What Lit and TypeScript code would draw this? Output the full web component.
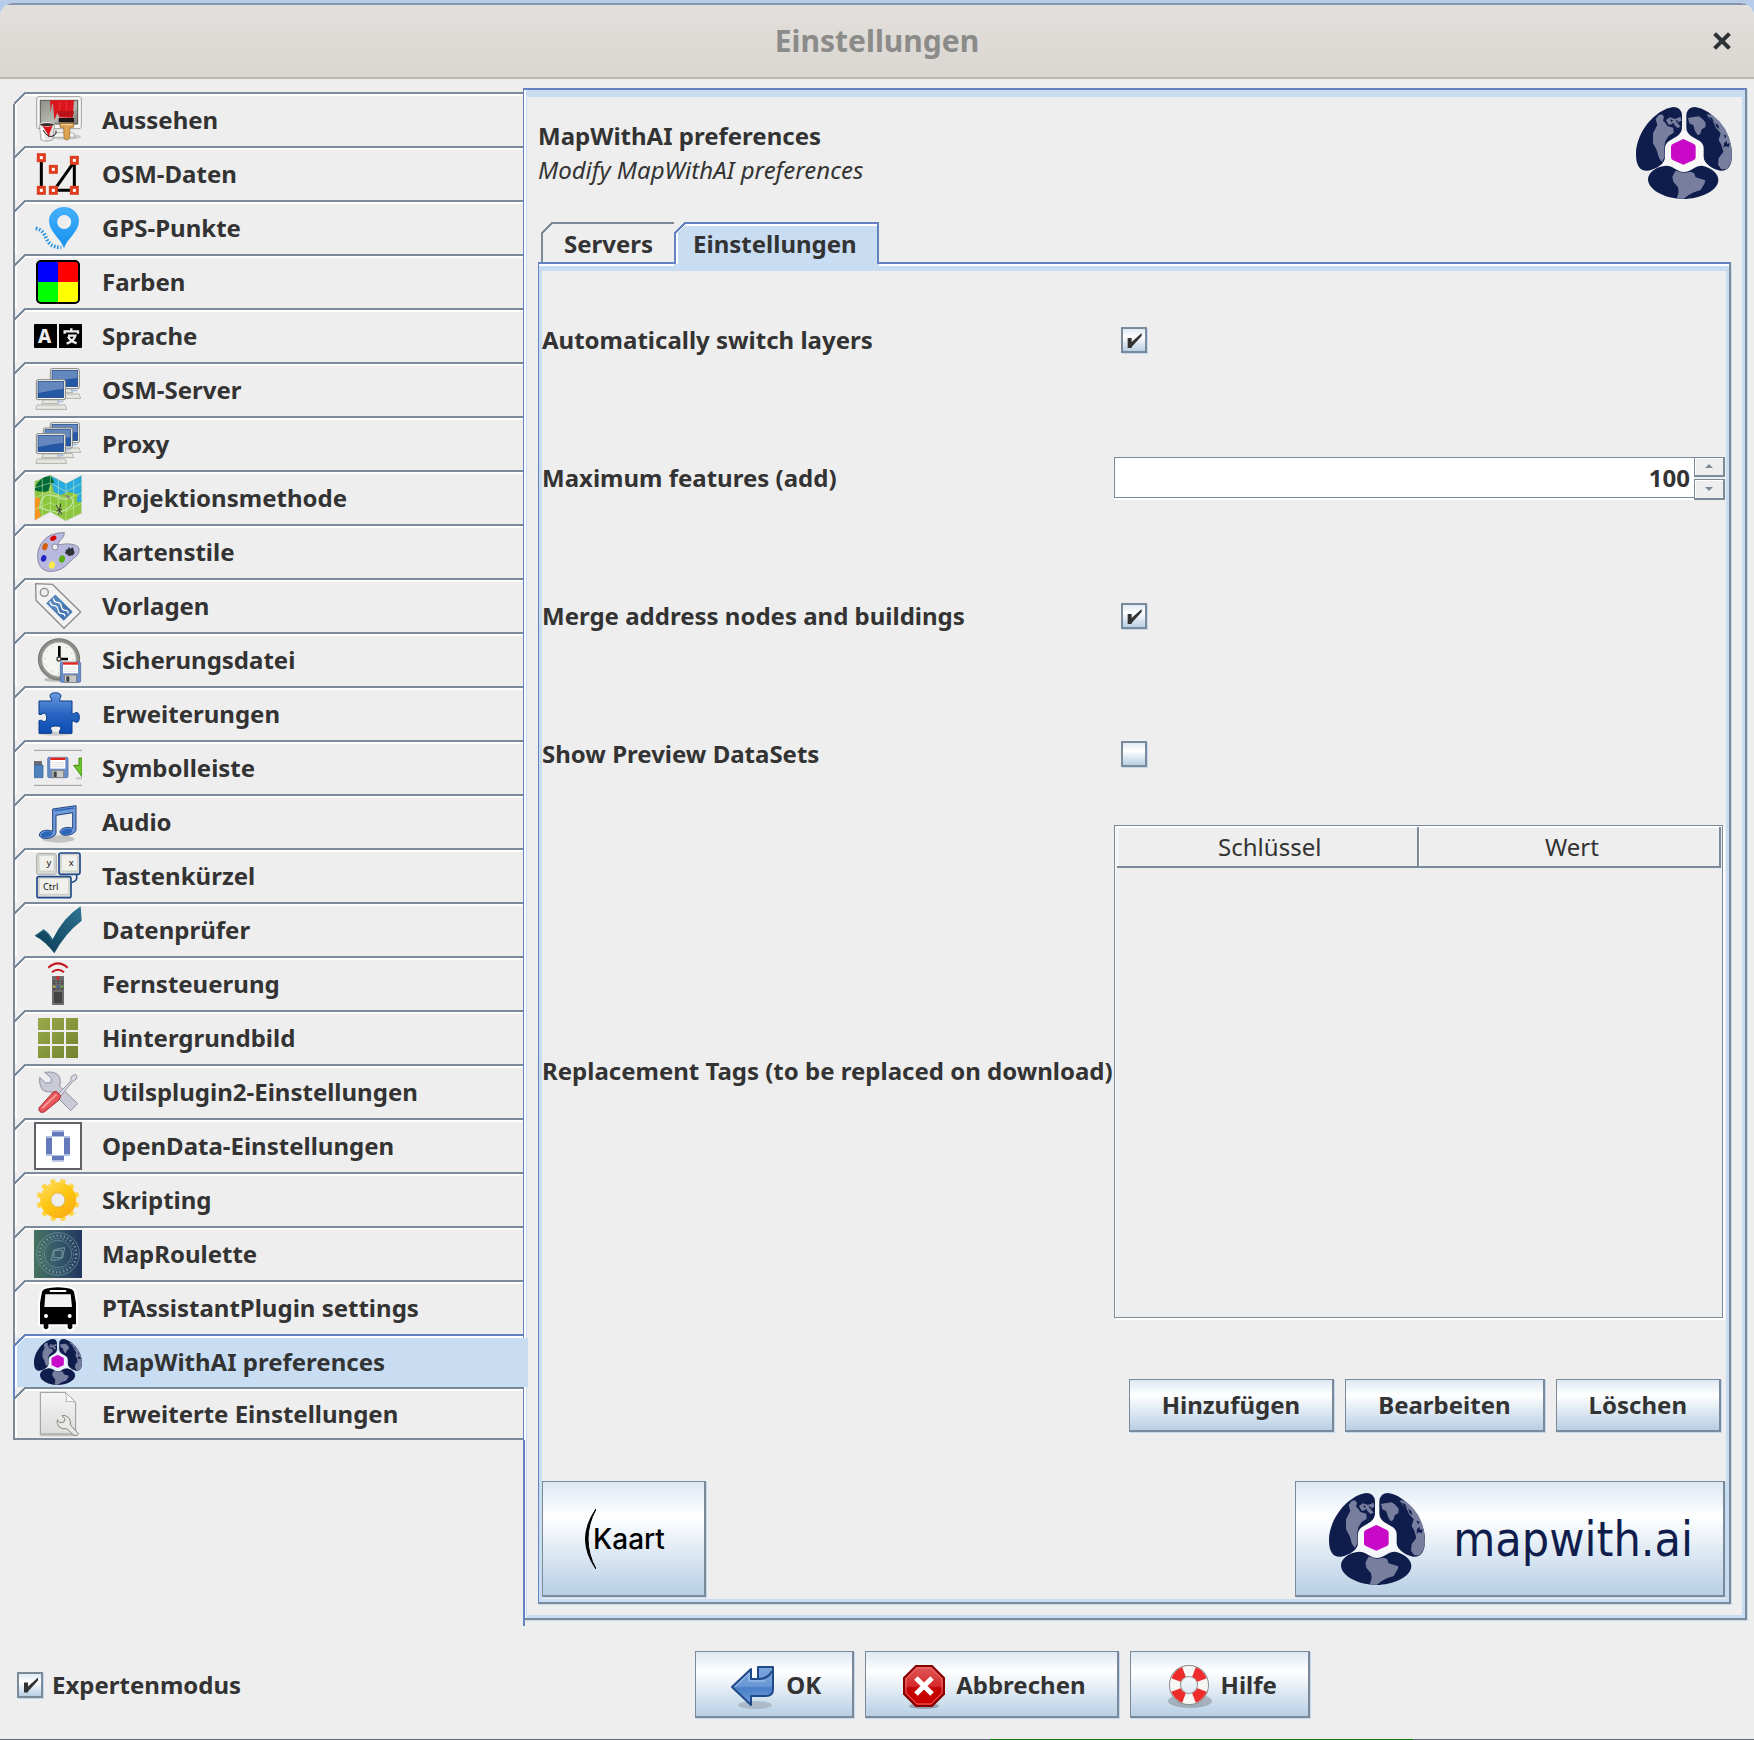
import { LitElement, html, svg, css, nothing } from "lit";
import type { SVGTemplateResult } from "lit";
import { customElement, state } from "lit/decorators.js";
import { classMap } from "lit/directives/class-map.js";

/* ---------- shared drawings ---------- */

const globeLogo = svg`
  <path d="M372 392 L432 425 L432 482 L475 508 L415 500 L372 518 L330 500 L275 508 L313 482 L313 425Z" fill="#ffffff" fill-opacity=".6"/>
  <path d="M366 345 Q363 321 340 321 C285 328 228 398 228 462 C228 498 240 514 264 512 C290 506 315 492 315 470 L315 446 Q315 432 326 424 L352 408 Q366 398 366 382Z" fill="#0f1d4d"/>
  <path d="M379 345 Q382 321 405 321 C459 328 516 398 516 462 C516 498 504 514 480 512 C456 506 431 490 431 470 L431 446 Q431 432 420 424 L393 408 Q379 398 379 382Z" fill="#0f1d4d"/>
  <path d="M318 497 C342 497 350 516 372 516 C394 516 402 497 426 497 C452 502 475 520 475 540 C475 572 420 597 370 597 C320 597 264 572 264 538 C264 515 292 499 318 497Z" fill="#0f1d4d"/>
  <path d="M287 357 L296 345 L306 343 L312 350 L309 362 L316 368 L322 378 L340 383 L341 398 L326 408 L316 424 L313 440 L314 470 L306 486 L297 474 L290 450 L279 430 L279 400 L292 375Z" fill="#777e9e"/>
  <path d="M318 360 L330 352 L345 357 L362 350 L364 362 L352 368 L362 380 L352 384 L340 372 L326 374Z" fill="#777e9e"/>
  <path d="M330 358l9 3-5 5zM347 360l8 3-4 6zM334 368l8 2 1 5z" fill="#0f1d4d"/>
  <path d="M384 354 L400 351 L416 349 L427 356 L437 368 L436 382 L425 388 L421 402 L413 406 L405 392 L400 376 L388 370Z" fill="#777e9e"/>
  <path d="M440 342 L458 346 L478 364 L496 388 L508 414 L514 440 L516 470 L511 492 L500 508 L484 508 L474 494 L476 474 L490 456 L484 434 L476 420 L482 400 L468 384 L460 366 L448 356Z" fill="#777e9e"/>
  <path d="M446 350l10 4 6 12-9-5zM466 368l9 8 3 12-9-8zM490 404l10 3-4 8zM492 430l8-8 1 10 8-2-3 12-9-4-6 6z" fill="#0f1d4d"/>
  <path d="M346 513 C356 511 362 518 374 518 L392 515 L402 519 L407 532 L436 541 L434 550 L422 570 L402 577 L386 585 L372 596 L350 596 L356 576 L354 562 L340 545 L337 530Z" fill="#777e9e"/>
  <path d="M365 419 Q370 415 375 419 L402 432 Q407 435 407 440 V472 Q407 477 402 480 L375 492 Q370 496 365 492 L338 480 Q333 477 333 472 V440 Q333 435 338 432Z" fill="#c80ac8"/>`;

const computer = (x: number, y: number) => svg`
  <g transform="translate(${x} ${y})">
    <path d="M24 61h40l5 12H18z" fill="#e6e6e0" stroke="#999a94" stroke-width="2"/>
    <path d="M66 62l20-3M66 68l18-2" stroke="#a9c3e6" stroke-width="4"/>
    <path d="M4 77h84l5 13H1z" fill="#f3f3ee" stroke="#8f908a" stroke-width="2"/>
    <path d="M9 81h74M7 86h80" stroke="#c4c5bd" stroke-width="2" stroke-dasharray="4 2"/>
    <rect x="2" y="1" width="87" height="60" rx="5" fill="#f5f5f1" stroke="#85867f" stroke-width="3"/>
    <rect x="7" y="6" width="77" height="49" fill="#2457a4" stroke="#173d7c" stroke-width="2"/>
    <path d="M8 7h75v22C55 31 28 38 8 41z" fill="#8fa9d0" fill-opacity=".6"/>
  </g>`;

const floppy = (x: number, y: number) => svg`
  <g transform="translate(${x} ${y})">
    <rect x="1" y="1" width="61" height="61" rx="4" fill="#6a8cc7" stroke="#42639c" stroke-width="2"/>
    <rect x="9" y="2" width="45" height="33" fill="#fff"/>
    <rect x="9" y="2" width="45" height="7" fill="#e2231a"/>
    <path d="M13 17h37M13 23h37M13 29h37" stroke="#d5d5d5" stroke-width="2"/>
    <rect x="14" y="40" width="35" height="22" fill="#c7c8c4" stroke="#76777a" stroke-width="2"/>
    <rect x="19" y="44" width="9" height="16" fill="#3e4247"/>
  </g>`;

const keycap = (x: number, y: number, w: number, h: number, edge: string, thick: number) => svg`
  <rect x=${x} y=${y} width=${w} height=${h} rx="6" fill="#d9dad5" stroke=${edge} stroke-width=${thick}/>
  <rect x=${x + 7} y=${y + 5} width=${w - 14} height=${h - 15} rx="4" fill="#f0f0ec" stroke="#c1c2bc" stroke-width="2"/>`;

const gearTeeth = Array.from({ length: 12 }, (_, i) => i * 30);
const tileCells = [0, 1, 2].flatMap((r) => [0, 1, 2].map((c) => [c, r]));

/* ---------- category icons: [viewBox, drawing] ---------- */

type Icon = [string, SVGTemplateResult];

const icons: Record<string, Icon> = {
  display: ["102 45 144 144", svg`
    <defs><linearGradient id="scr" x2="1" y2="1"><stop stop-color="#8c8e88"/><stop offset=".6" stop-color="#b7b9b3"/><stop offset="1" stop-color="#70726c"/></linearGradient></defs>
    <ellipse cx="195" cy="167" rx="48" ry="9" fill="#000" fill-opacity=".15"/>
    <path d="M165 155h55l5 14h-65z" fill="#f2f2f0" stroke="#9a9b96" stroke-width="2"/>
    <rect x="110" y="47" width="134" height="96" rx="7" fill="#f7f7f5" stroke="#a1a29d" stroke-width="3"/>
    <rect x="121" y="58" width="112" height="71" fill="url(#scr)" stroke="#555753" stroke-width="3"/>
    <path d="M150 58l2 36 4-26 3 0 4 50 9-23 6 14 40 1 4-52z" fill="#dc141b"/>
    <path d="M181 62l-3 28M200 62v26" stroke="#e8363c" stroke-width="3"/>
    <path d="M176 111h46v13h-46z" fill="#201416"/>
    <path d="M175 98l7 11 5-8 5 9 6-8 6 8 6-8 5 8 6-12v-8h-46z" fill="#b5121a"/>
    <path d="M180 127h41v12h-11l-2 32q-8 12-16 0l-1-32h-11z" fill="#dca452" stroke="#8f5f16" stroke-width="2"/>
    <path d="M184 131h33" stroke="#f4d6a1" stroke-width="3"/>
    <path d="M118 131l5 46q17 8 35 0l6-46z" fill="#e4e4e2" stroke="#8a8b86" stroke-width="2"/>
    <path d="M122 140l6 38h6l-3-38z" fill="#fff"/>
    <ellipse cx="141" cy="131" rx="23" ry="6" fill="#3b2a2c" stroke="#efefed" stroke-width="3"/>
    <path d="M127 134q14 6 31 0l-9 22-2 14-6-14z" fill="#dc1018"/>
    <path d="M129 147q16 28 34 16 8-6 5-14" fill="none" stroke="#1c1c1c" stroke-width="3"/>`],
  nodes: ["102 207 144 144", svg`
    <path d="M124 230v98M223 238v90M160 328h63M162 328l61-86" fill="none" stroke="#000" stroke-width="9"/>
    ${[[124, 230], [124, 328], [160, 265], [160, 328], [223, 238], [223, 328]].map(([x, y]) => svg`
      <rect x=${x - 9} y=${y - 9} width="18" height="18" fill="#fff" stroke="#de3d20" stroke-width="9"/>`)}`],
  gps: ["102 369 144 144", svg`
    <defs><linearGradient id="pin" x2="0" y2="1"><stop stop-color="#45b1ff"/><stop offset="1" stop-color="#1590ec"/></linearGradient></defs>
    <path d="M192 502C184 474 147 452 147 420A45 42 0 0 1 237 420C237 452 200 474 192 502ZM192 402a21 21 0 1 0 1 0z" fill="url(#pin)" fill-rule="evenodd"/>
    <path d="M107 442C150 450 126 500 184 499" fill="none" stroke="#2b95e2" stroke-width="11" stroke-dasharray="5 5"/>`],
  colors: ["102 531 144 144", svg`
    <defs><clipPath id="rc"><rect x="111" y="540" width="126" height="126" rx="12"/></clipPath></defs>
    <g clip-path="url(#rc)"><path d="M110 538h64v65h-64z" fill="#00f"/><path d="M174 538h66v65h-66z" fill="#f00"/>
    <path d="M110 603h64v66h-64z" fill="#0f0"/><path d="M174 603h66v66h-66z" fill="#ff0"/></g>
    <rect x="111" y="540" width="126" height="126" rx="12" fill="none" stroke="#000" stroke-width="6"/>`],
  language: ["102 693 144 144", svg`
    <path d="M105 729h66v72h-66q-3 0-3-3v-66q0-3 3-3zM177 729h66q3 0 3 3v66q0 3-3 3h-66z"/>
    <text x="134" y="786" font-family="Noto Sans" font-weight="800" font-size="56" text-anchor="middle" fill="#eee">A</text>
    <path d="M194 758v-7h40v7M214 742v8M204 764h22q-5 17-26 24M204 766q8 15 26 21" fill="none" stroke="#eee" stroke-width="7"/>`],
  server: ["102 45 144 144", svg`${computer(149, 52)}${computer(107, 85)}`],
  proxy: ["102 207 144 144", svg`${computer(149, 214)}${computer(128, 230)}${computer(107, 247)}`],
  projection: ["102 369 144 144", svg`
    <path d="M104 391l47-19 47 26 47-25v114l-48 23-46-27-47 25z" fill="#8cc63f" stroke="#d6d6d6" stroke-width="2"/>
    <path d="M151 374l47 24 46-24v80l-14-2 4-22-30-8-22 10-20-8-6-24z" fill="#29abe2"/>
    <path d="M105 410q10-32 46-36 8 10 12 20-14 4-18 26-20 6-40-2z" fill="#006837"/>
    <path d="M105 437l16 6-6 28 8 24-18 13z" fill="#f7931e"/>
    <path d="M127 384v118M151 374v110M175 386v112M198 398v110M221 388v114M105 440l46-18 47 22 46-18M105 475l46-20 47 26 46-24M105 410l46-14 47 26 46-24" fill="none" stroke="#d9efb5" stroke-width="2" stroke-opacity=".8"/>
    <path d="M120 470q4-42 30-38t30 10 34-2q14 18-14 34t-28 12-28-8z" fill="none" stroke="#bfe4a0" stroke-width="4"/>
    <path d="M192 430l14 4 6 10-10-2z" fill="#8a8b80"/>
    <path d="M168 462l18 28M182 458l-6 34M170 480l16-6" stroke="#333" stroke-width="3"/>`],
  styles: ["102 531 144 144", svg`
    <path d="M193 545q-18-2-42 8c-26 14-40 40-38 68 2 30 20 42 44 40 30-2 44-20 58-34 14-12 24-18 22-34-4-14-34-18-62-11-2-14 18-18 18-37z" fill="#b9b9df" stroke="#62627c" stroke-width="2"/>
    <circle cx="165" cy="588" r="9" fill="#eee" stroke="#62627c" stroke-width="2"/>
    <ellipse cx="160" cy="562" rx="10" ry="7" fill="#d40000" transform="rotate(-30 160 562)"/>
    <ellipse cx="135" cy="587" rx="8" ry="11" fill="#d45f0c" transform="rotate(20 135 587)"/>
    <ellipse cx="131" cy="622" rx="8" ry="10" fill="#2424c2" transform="rotate(20 131 622)"/>
    <ellipse cx="156" cy="642" rx="9" ry="11" fill="#fce94f" transform="rotate(20 156 642)"/>
    <ellipse cx="186" cy="624" rx="9" ry="11" fill="#5aad12" transform="rotate(20 186 624)"/>
    <path d="M196 597l8-2 2-8 5 6 8-4 2 8 3 8-5 8-12 2-8-6-5-4 4-3z" fill="#2e3436"/>`],
  tag: ["102 693 144 144", svg`
    <path d="M107 698l50 2 85 83-50 49-84-84z" fill="#f2f2f2" stroke="#8c8c8a" stroke-width="4" stroke-linejoin="round"/>
    <circle cx="133" cy="724" r="12" fill="#eee" stroke="#8c8c8a" stroke-width="4"/>
    <path d="M166 731l52 51-27 27-52-52z" fill="#4376ae"/>
    <path d="M166 731l26 25-27 27-26-26z" fill="#5b8dc0" fill-opacity=".7"/>
    <path d="M160 742q2 12 12 12t12 12 12 12 8 10M150 752q2 12 12 12t12 12 12 12 8 8" fill="none" stroke="#fff" stroke-width="4"/>`],
  backup: ["102 45 144 144", svg`
    <ellipse cx="172" cy="176" rx="40" ry="7" fill="#000" fill-opacity=".2"/>
    <circle cx="177" cy="115" r="57" fill="#f4f4f1" stroke="#8b8d88" stroke-width="11"/>
    <circle cx="177" cy="115" r="62" fill="none" stroke="#5f615d" stroke-width="2"/>
    <circle cx="177" cy="115" r="51" fill="none" stroke="#bcbdb8" stroke-width="3"/>
    <circle cx="177" cy="115" r="42" fill="none" stroke="#8d8e8a" stroke-width="3" stroke-dasharray="2 20"/>
    <path d="M178 75v34M182 114h22" stroke="#000" stroke-width="8"/>
    <circle cx="177" cy="114" r="6" fill="#eee" stroke="#444" stroke-width="4"/>
    ${floppy(180, 122)}`],
  plugins: ["102 207 144 144", svg`
    <defs><linearGradient id="pz" x2="0" y2="1"><stop stop-color="#6c9be0"/><stop offset=".5" stop-color="#2a66c2"/><stop offset="1" stop-color="#0a4bb4"/></linearGradient></defs>
    <ellipse cx="166" cy="338" rx="50" ry="6" fill="#000" fill-opacity=".15"/>
    <path d="M117 240h37q2-6-3-11-5-13 16-14 20 2 15 14-5 6-2 11h36v38q6 2 10-3 12-3 12 14 0 18-12 14-5-5-10-2v36h-37q-3-8 3-12 5-10-15-10-21 1-14 11 5 4 1 11h-37v-38q8-4 12 2 11 3 11-12-1-15-11-12-4 6-12 3z" fill="url(#pz)" stroke="#0b3a86" stroke-width="3"/>`],
  toolbar: ["102 369 144 144", svg`
    <path d="M102 388h144M102 493h144" stroke="#9a9a9a" stroke-width="3"/>
    <path d="M102 420h24v12h-24z" fill="#6a6c70"/><path d="M102 432h27v38h-27z" fill="#4f82bd" stroke="#2f5c94" stroke-width="2"/>
    ${floppy(142, 408)}
    <path d="M246 411h-9v22h-16l25 34z" fill="#6fc62d" stroke="#3f8a10" stroke-width="3"/>
    <ellipse cx="240" cy="472" rx="14" ry="4" fill="#000" fill-opacity=".15"/>`],
  audio: ["102 531 144 144", svg`
    <ellipse cx="175" cy="654" rx="48" ry="11" fill="#000" fill-opacity=".18"/>
    <path d="M158 564l70-10v72c-2 18-48 24-48 6 2-12 24-16 38-10v-47l-50 8v52c-2 20-50 24-50 6 2-14 26-16 40-10z" fill="#6f9bdc" stroke="#23437c" stroke-width="3"/>
    <path d="M164 569l58-8" stroke="#2b5fb0" stroke-width="4"/>
    <ellipse cx="140" cy="640" rx="18" ry="9" fill="#2e66b8" transform="rotate(-12 140 640)"/>
    <ellipse cx="200" cy="632" rx="17" ry="9" fill="#2e66b8" transform="rotate(-12 200 632)"/>`],
  keys: ["102 693 144 144", svg`
    <path d="M230 762v10q-2 10-16 12" fill="none" stroke="#204a87" stroke-width="5"/>
    ${keycap(110, 698, 59, 62, "#888a85", 2)}${keycap(177, 696, 63, 64, "#204a87", 5)}${keycap(111, 767, 102, 63, "#204a87", 5)}
    <g font-family="Noto Sans" font-weight="400" font-size="28" text-anchor="middle" fill="#111">
      <text x="147" y="734">y</text><text x="214" y="734">x</text><text x="152" y="808">Ctrl</text>
    </g>`],
  check: ["102 45 144 144", svg`
    <defs><linearGradient id="ck" x1="1" x2="0" y2="1"><stop stop-color="#2f7393"/><stop offset="1" stop-color="#093a52"/></linearGradient></defs>
    <path d="M104 134l27-19q14 8 27 30 32-66 84-99l3 43q-50 38-82 98-26-36-59-53z" fill="url(#ck)"/>
    <path d="M106 134l25-17q16 10 27 31" fill="none" stroke="#3f89a8" stroke-width="2"/>`],
  remote: ["102 207 144 144", svg`
    <path d="M145 230q29-26 58 0M156 244q18-15 36 0" fill="none" stroke="#c4161c" stroke-width="6"/>
    <rect x="156" y="255" width="36" height="87" rx="2" fill="#6b6b6b"/>
    <rect x="162" y="303" width="24" height="33" fill="#434343"/>
    <circle cx="174" cy="261" r="5" fill="#e02020"/>
    <path d="M159 271h30M159 278h30M159 294h30" stroke="#444" stroke-width="4" stroke-dasharray="7 5"/>
    <path d="M159 287h7" stroke="#e6d31c" stroke-width="4"/><path d="M170 287h7" stroke="#2458c8" stroke-width="4"/><path d="M182 287h7" stroke="#54c21c" stroke-width="4"/>`],
  imagery: ["102 369 144 144", svg`
    <defs><linearGradient id="im" gradientUnits="userSpaceOnUse" x1="114" y1="381" x2="234" y2="501"><stop stop-color="#98aa4b"/><stop offset="1" stop-color="#74832f"/></linearGradient></defs>
    ${tileCells.map(([c, r]) => svg`<rect x=${114 + c * 42} y=${381 + r * 42} width="36" height="36" fill="url(#im)"/>`)}`],
  tools: ["102 531 144 144", svg`
    <path d="M134 544l18-1q20 2 27 16 4 14 0 27l54 52-21 21-56-56q-20 2-30-8-10-16-7-36l18 17 16-1 1-14z" fill="#c9cad6" stroke="#9293a3" stroke-width="3"/>
    <path d="M176 608l36-38 2-13 12-7q8 4 3 14l-12 8-34 42z" fill="#d9dae4" stroke="#9293a3" stroke-width="3"/>
    <path d="M170 602l12 12-4 12-44 36q-12 6-17-4-2-10 6-14l38-42z" fill="#e8565a" stroke="#a8282c" stroke-width="3"/>
    <path d="M126 652l44-42" stroke="#f7a3a3" stroke-width="5"/>`],
  opendata: ["102 693 144 144", svg`
    <rect x="105" y="696" width="138" height="138" fill="#fff" stroke="#5f6166" stroke-width="6"/>
    <path d="M156 717h36v6h-36zM138 735h72v6h-72zM138 789h72v6h-72zM156 807h36v5h-36z" fill="#b3c0e2"/>
    <path d="M156 723h36v12h-36zM156 795h36v12h-36zM138 741h18v48h-18zM192 741h18v48h-18z" fill="#6379bb"/>
    <path d="M156 738h36v54h-36z" fill="#fff"/>`],
  gear: ["102 45 144 144", svg`
    <defs><linearGradient id="gr" gradientUnits="userSpaceOnUse" x1="130" y1="60" x2="210" y2="175"><stop stop-color="#ffdc62"/><stop offset=".5" stop-color="#ffc60e"/><stop offset="1" stop-color="#f9a81a"/></linearGradient></defs>
    <g fill="url(#gr)">
      ${gearTeeth.map((a) => svg`<rect x="166" y="53" width="15" height="24" rx="2" transform="rotate(${a + 15} 174 117)"/>`)}
      <path d="M174 63a54 54 0 1 0 1 0zM174 96a21 21 0 1 1-1 0z" fill-rule="evenodd"/>
    </g>
    <circle cx="174" cy="117" r="21" fill="none" stroke="#cfa45a" stroke-width="2"/>`],
  roulette: ["102 207 144 144", svg`
    <defs><linearGradient id="rl"><stop stop-color="#46725f"/><stop offset=".5" stop-color="#35586a"/><stop offset="1" stop-color="#22365f"/></linearGradient></defs>
    <rect x="102" y="207" width="144" height="144" fill="url(#rl)"/>
    <g fill="none" stroke="#7896a0" stroke-width="2">
      <circle cx="174" cy="279" r="64"/><circle cx="174" cy="279" r="41"/>
      <circle cx="174" cy="279" r="55" stroke-width="7" stroke-dasharray="4 7"/><circle cx="174" cy="279" r="47" stroke-dasharray="7 4"/>
      <path d="M154 298l6-30q22-8 34-8l-6 30q-16 10-34 8zM162 268h24v22h-24z" stroke-width="3"/>
    </g>`],
  bus: ["102 369 144 144", svg`
    <path d="M126 392q4-12 48-13 44 1 48 13l6 34v64h-11v14q-8 8-14 0v-14h-58v14q-6 8-14 0v-14h-11v-64z" fill="#fff" stroke="#fff" stroke-width="12" stroke-linejoin="round"/>
    <path d="M126 392q4-12 48-13 44 1 48 13l6 34v64h-11v11q-7 7-14 0v-11h-58v11q-7 7-14 0v-11h-11v-64z"/>
    <rect x="149" y="387" width="50" height="6" rx="2" fill="#fff"/>
    <path d="M136 400h76l4 38h-83z" fill="#f2f2f2"/>
    <circle cx="138" cy="465" r="6" fill="#fff"/><circle cx="209" cy="465" r="6" fill="#fff"/>`],
  globe: ["228 315 288 288", globeLogo],
  advanced: ["102 690 144 144", svg`
    <defs><linearGradient id="pg" x2="0" y2="1"><stop stop-color="#f5f5f5"/><stop offset="1" stop-color="#dcdcdc"/></linearGradient></defs>
    <path d="M119 826h110" stroke="#000" stroke-opacity=".18" stroke-width="5"/>
    <path d="M121 697h75l31 30v95H121z" fill="url(#pg)" stroke="#969894" stroke-width="3"/>
    <path d="M196 697q6 14 2 28 16-3 29 2z" fill="#fafafa" stroke="#969894" stroke-width="2"/>
    <path d="M186 767l9 10-4 10-12 1-7-9q-4 12 6 22 10 8 22 5l22 20q10 3 14-4l-25-27q3-14-6-23-10-8-19-5z" fill="#e9e9e5" stroke="#84867f" stroke-width="3"/>`],
};

interface Category { icon: string; label: string; }

const categories: Category[] = [
  { icon: "display", label: "Aussehen" },
  { icon: "nodes", label: "OSM-Daten" },
  { icon: "gps", label: "GPS-Punkte" },
  { icon: "colors", label: "Farben" },
  { icon: "language", label: "Sprache" },
  { icon: "server", label: "OSM-Server" },
  { icon: "proxy", label: "Proxy" },
  { icon: "projection", label: "Projektionsmethode" },
  { icon: "styles", label: "Kartenstile" },
  { icon: "tag", label: "Vorlagen" },
  { icon: "backup", label: "Sicherungsdatei" },
  { icon: "plugins", label: "Erweiterungen" },
  { icon: "toolbar", label: "Symbolleiste" },
  { icon: "audio", label: "Audio" },
  { icon: "keys", label: "Tastenkürzel" },
  { icon: "check", label: "Datenprüfer" },
  { icon: "remote", label: "Fernsteuerung" },
  { icon: "imagery", label: "Hintergrundbild" },
  { icon: "tools", label: "Utilsplugin2-Einstellungen" },
  { icon: "opendata", label: "OpenData-Einstellungen" },
  { icon: "gear", label: "Skripting" },
  { icon: "roulette", label: "MapRoulette" },
  { icon: "bus", label: "PTAssistantPlugin settings" },
  { icon: "globe", label: "MapWithAI preferences" },
  { icon: "advanced", label: "Erweiterte Einstellungen" },
];

const okIcon = svg`
  <defs><linearGradient id="ok" x2="0" y2="1"><stop stop-color="#7ba6dc"/><stop offset=".5" stop-color="#6a98d6"/><stop offset=".55" stop-color="#4a7fc8"/><stop offset="1" stop-color="#6f9ddb"/></linearGradient></defs>
  <ellipse cx="25" cy="44" rx="17" ry="4" fill="#000" fill-opacity=".15"/>
  <path d="M2 26L21 8v10h7V6h15v22q0 7-7 7H21v9z" fill="url(#ok)" stroke="#204a87" stroke-width="2" stroke-linejoin="round"/>
  <path d="M28 18q10 0 14-8" fill="none" stroke="#204a87" stroke-width="2"/>
  <path d="M5 26L19 12v8h16" fill="none" stroke="#a9c7ec" stroke-width="1"/>`;

const cancelIcon = svg`
  <defs><linearGradient id="cn" x2="0" y2="1"><stop stop-color="#e25a5a"/><stop offset=".5" stop-color="#d42a2a"/><stop offset=".55" stop-color="#c00000"/><stop offset="1" stop-color="#d00000"/></linearGradient></defs>
  <ellipse cx="24" cy="45" rx="15" ry="3" fill="#000" fill-opacity=".25"/>
  <path d="M16 5h16l12 12v16L32 45H16L4 33V17z" fill="url(#cn)" stroke="#860000" stroke-width="2"/>
  <path d="M17 7h14l11 11v14L31 43H17L6 32V18z" fill="none" stroke="#ef6b6b" stroke-width="1"/>
  <path d="M16 17l16 16M32 17L16 33" stroke="#fff" stroke-width="5"/>`;

const helpIcon = svg`
  <ellipse cx="25" cy="40" rx="22" ry="7" fill="#000" fill-opacity=".2"/>
  <circle cx="24" cy="24" r="14" fill="none" stroke="#8d8d8d" stroke-width="12"/>
  <circle cx="24" cy="24" r="14" fill="none" stroke="#f7f7f5" stroke-width="10"/>
  <g fill="none" stroke="#ee2c2c" stroke-width="10">
    <path d="M11 19a14 14 0 0 1 8-8M29 11a14 14 0 0 1 8 8M37 29a14 14 0 0 1-8 8M19 37a14 14 0 0 1-8-8"/>
  </g>`;

@customElement("app-root")
export class AppRoot extends LitElement {
  @state() private selected = "globe";

  static styles = css`
    :host {
      --ink: #333333;
      --line: #7a8a99;
      --blue: #6382bf;
      --light: #c8ddf2;
      --face: #eeeeee;
      display: block;
      color: var(--ink);
      font: 700 24px/34px "Noto Sans", sans-serif;
    }
    * { box-sizing: border-box; }
    button, input { font: inherit; color: inherit; margin: 0; }
    h1, h2, p { margin: 0; font: inherit; }
    svg { display: block; flex: none; }

    .desktop {
      display: flex;
      flex-direction: column;
      min-height: 100vh;
      padding-top: 3px;
      background: #b7cce8;
    }
    .window {
      flex: 1;
      display: flex;
      flex-direction: column;
      background: var(--face);
      border-radius: 14px 14px 0 0;
      overflow: hidden;
    }
    .titlebar {
      display: grid;
      grid-template-columns: 1fr auto 1fr;
      align-items: center;
      height: 76px;
      padding: 0 22px;
      border-top: 2px solid #8595a9;
      border-bottom: 2px solid #bfb8b0;
      background: linear-gradient(#e2dfdc, #dad6d1);
    }
    .titlebar h1 { grid-column: 2; font-size: 30px; color: #8b8b89; }
    .close { justify-self: end; padding: 0; border: 0; background: none; }

    .body {
      flex: 1;
      display: grid;
      grid-template-columns: 510px minmax(0, 1fr);
      padding: 9px 7px 0 13px;
    }
    .side { display: flex; flex-direction: column; padding-top: 4px; }
    .rail {
      flex: 1;
      position: relative;
      margin-right: -2px;
      border-right: 2px solid var(--blue);
    }
    .categories { display: flex; flex-direction: column; border-bottom: 2px solid var(--line); }
    .category {
      --edge: var(--line);
      --prev: var(--line);
      --fill: var(--face);
      display: flex;
      align-items: center;
      gap: 20px;
      height: 54px;
      padding: 2px 0 0 21px;
      border: 0;
      text-align: left;
      background:
        linear-gradient(135deg, transparent calc(50% - 1px), var(--edge) calc(50% - 1px), var(--edge) calc(50% + 1px), white calc(50% + 1px), white calc(50% + 2px), transparent calc(50% + 2px)) 1px 0 / 12px 12px no-repeat,
        linear-gradient(var(--edge), var(--edge)) 13px 0 / 497px 2px no-repeat,
        linear-gradient(white, white) 12px 2px / 498px 2px no-repeat,
        linear-gradient(var(--prev), var(--prev)) 0 0 / 2px 12px no-repeat,
        linear-gradient(var(--edge), var(--edge)) 0 12px / 2px 100% no-repeat,
        linear-gradient(white, white) 2px 12px / 2px 100% no-repeat,
        linear-gradient(var(--fill), var(--fill)) 4px 4px / 100% 100% no-repeat;
    }
    .category:first-child { --prev: transparent; }
    .category.selected {
      --edge: var(--blue);
      --fill: var(--light);
      position: relative;
      z-index: 1;
      height: 53px;
      margin-right: -5px;
    }
    .selected + .category { --prev: var(--blue); height: 51px; }

    .panel {
      display: flex;
      flex-direction: column;
      margin-bottom: 6px;
      padding: 15px 14px 14px 14px;
      border: solid var(--blue);
      border-width: 2px 2px 2px 1px;
      border-right-color: var(--line);
      border-bottom-color: var(--line);
      box-shadow: 1px 1px 0 var(--light), inset 2px 0 white, inset 3px 0 var(--light),
        inset 0 7px var(--light), inset -3px -3px var(--light);
    }
    .heading { display: flex; justify-content: space-between; height: 117px; margin-right: -1px; }
    .heading-text { padding-top: 14px; }
    .heading em { display: block; font-weight: 400; }

    .tabs { display: flex; padding-left: 3px; }
    .tab {
      height: 42px;
      padding: 2px 21px 0 23px;
      border: 0;
      margin-bottom: -2px;
      background:
        linear-gradient(135deg, transparent calc(50% - 1px), var(--line) calc(50% - 1px), var(--line) calc(50% + 1px), transparent calc(50% + 1px)) 0 0 / 12px 12px no-repeat,
        linear-gradient(var(--line), var(--line)) 12px 0 / 100% 2px no-repeat,
        linear-gradient(var(--line), var(--line)) 0 12px / 2px 100% no-repeat;
    }
    .tab.current {
      position: relative;
      height: 46px;
      padding: 0 20px 2px 19px;
      margin: 0 0 -6px 0;
      border-right: 2px solid var(--blue);
      border-image: linear-gradient(var(--blue) 42px, var(--light) 42px) 0 2 0 0;
      background:
        linear-gradient(135deg, transparent calc(50% - 1px), var(--blue) calc(50% - 1px), var(--blue) calc(50% + 1px), white calc(50% + 1px), white calc(50% + 2px), transparent calc(50% + 2px)) 0 0 / 12px 12px no-repeat,
        linear-gradient(var(--blue), var(--blue)) 12px 0 / 100% 2px no-repeat,
        linear-gradient(white, white) 12px 2px / 100% 2px no-repeat,
        linear-gradient(var(--blue), var(--blue)) 0 12px / 2px 30px no-repeat,
        linear-gradient(white, white) 2px 12px / 2px 30px no-repeat,
        linear-gradient(135deg, transparent 9px, var(--light) 9px);
    }
    .page {
      flex: 1;
      display: flex;
      flex-direction: column;
      padding: 7px 4px 5px 3px;
      border: solid var(--blue);
      border-width: 2px 2px 2px 1px;
      border-right-color: var(--line);
      border-bottom-color: var(--line);
      box-shadow: 1px 1px 0 var(--light), inset 0 2px white, inset 3px 7px var(--light),
        inset -3px -3px var(--light);
    }
    .options {
      flex: 1;
      display: grid;
      grid-template-columns: auto minmax(0, 1fr);
      grid-template-rows: repeat(4, 138px) 1fr auto;
      column-gap: 1px;
      align-items: center;
    }

    .box {
      appearance: none;
      flex: none;
      display: block;
      width: 26px;
      height: 26px;
      border: 2px solid var(--line);
      background: linear-gradient(#dfe9f4, white 35%, #b8cfe5);
      box-shadow: 1px 1px 0 #c3d8ee;
    }
    .box:checked::before {
      content: "";
      display: block;
      width: 22px;
      height: 22px;
      background: var(--ink);
      clip-path: polygon(5px 9px, 9px 9px, 9px 13px, 19px 4px, 19px 7px, 9px 18px, 9px 19px, 5px 19px);
    }
    .options .box { margin-left: 7px; }

    .spinner { display: flex; height: 43px; }
    .number {
      appearance: textfield;
      flex: 1;
      min-width: 0;
      height: 41px;
      padding: 0 4px;
      border: 1px solid var(--line);
      border-right: 0;
      border-radius: 0;
      outline: 0;
      text-align: right;
      background: white;
      box-shadow: 0 2px 0 white;
    }
    .number::-webkit-inner-spin-button { display: none; }
    .steps { display: flex; flex-direction: column; gap: 2px; width: 31px; }
    .step {
      flex: 1;
      display: grid;
      place-items: center;
      padding: 0;
      border: solid var(--line);
      border-width: 1px 2px 2px 1px;
      background: var(--face);
      box-shadow: inset 1px 1px white;
    }

    .tags {
      align-self: stretch;
      margin: 2px 2px 0 0;
      padding: 1px 1px 0 2px;
      border: 1px solid var(--line);
      box-shadow: 2px 2px 0 white, inset 1px 1px white;
    }
    .tags table { width: 100%; border-spacing: 0; table-layout: fixed; }
    .tags th {
      height: 41px;
      padding: 0 0 0 6px;
      font-weight: 400;
      border: solid var(--line);
      border-width: 0 2px 2px 0;
      box-shadow: inset 1px 1px white;
    }

    .actions {
      grid-column: 2;
      display: flex;
      justify-content: flex-end;
      gap: 11px;
      padding: 61px 4px 49px 0;
    }
    .push {
      display: flex;
      align-items: center;
      justify-content: center;
      gap: 8px;
      height: 53px;
      padding: 0 32px;
      border: solid var(--line);
      border-width: 1px 2px 2px 1px;
      background: linear-gradient(#dde8f3, white 30%, #b8cfe5);
      box-shadow: 1px 1px 0 #c3d8ee;
    }
    .sponsors { display: flex; justify-content: space-between; }
    .sponsors .push { height: 116px; }
    .sponsors .kaart { gap: 0; font: 500 28px/34px "Inter", sans-serif; color: #000000; padding: 0 39px 0 41px; }
    .kaart svg { margin-right: -3px; }
    .sponsors .mapwith {
      gap: 28px;
      font: 400 48px/72px "DejaVu Sans Condensed", "DejaVu Sans", sans-serif;
      color: #0f1d4d;
      padding: 0 30px 0 33px;
    }

    .footer { display: flex; align-items: center; padding: 25px 0 21px 17px; }
    .expert { display: flex; align-items: center; gap: 9px; }
    .dialog-buttons { flex: 1; display: flex; justify-content: center; gap: 11px; padding-left: 10px; }
    .dialog-buttons .push { height: 67px; padding: 2px 31px 0 34px; }
    .taskbar {
      height: 1px;
      background: linear-gradient(90deg, #5d6a76 990px, #0d7d10 990px, #0d7d10 1413px, #5d6a76 1413px);
    }
  `;

  private icon(name: string, size = 48) {
    const [box, art] = icons[name];
    return html`<svg width=${size} height=${size} viewBox=${box} aria-hidden="true">${art}</svg>`;
  }

  render() {
    return html`
      <div class="desktop">
        <div class="window">
          <header class="titlebar">
            <h1>Einstellungen</h1>
            <button class="close" aria-label="Schließen">
              <svg width="20" height="20" viewBox="0 0 20 20"><path d="M4 4l12 12M16 4L4 16" stroke="#2e3436" stroke-width="4" stroke-linecap="square"/></svg>
            </button>
          </header>

          <main class="body">
            <div class="side">
              <nav class="categories" role="tablist" aria-orientation="vertical">
                ${categories.map((c) => html`
                  <button
                    class=${classMap({ category: true, selected: c.icon === this.selected })}
                    role="tab"
                    aria-selected=${c.icon === this.selected ? "true" : "false"}
                    @click=${() => (this.selected = c.icon)}
                  >${this.icon(c.icon)}<span>${c.label}</span></button>`)}
              </nav>
              <div class="rail"></div>
            </div>

            <section class="panel">
              <div class="heading">
                <div class="heading-text">
                  <h2>MapWithAI preferences</h2>
                  <em>Modify MapWithAI preferences</em>
                </div>
                ${this.icon("globe", 96)}
              </div>
              <div class="tabs" role="tablist">
                <button class="tab" role="tab" aria-selected="false">Servers</button>
                <button class="tab current" role="tab" aria-selected="true">Einstellungen</button>
              </div>
              <div class="page">
                <div class="options">
                  <label for="switch">Automatically switch layers</label>
                  <input class="box" id="switch" type="checkbox" checked />

                  <label for="max">Maximum features (add)</label>
                  <div class="spinner">
                    <input class="number" id="max" type="number" value="100" />
                    <div class="steps">
                      <button class="step" aria-label="Mehr"><svg width="8" height="4" viewBox="0 0 8 4"><path d="M0 4l4-4 4 4z" fill="#7a8a99"/></svg></button>
                      <button class="step" aria-label="Weniger"><svg width="8" height="4" viewBox="0 0 8 4"><path d="M0 0h8L4 4z" fill="#7a8a99"/></svg></button>
                    </div>
                  </div>

                  <label for="merge">Merge address nodes and buildings</label>
                  <input class="box" id="merge" type="checkbox" checked />

                  <label for="preview">Show Preview DataSets</label>
                  <input class="box" id="preview" type="checkbox" />

                  <span id="tags-label">Replacement Tags (to be replaced on download)</span>
                  <div class="tags">
                    <table aria-labelledby="tags-label">
                      <thead><tr><th scope="col">Schlüssel</th><th scope="col">Wert</th></tr></thead>
                      <tbody>${nothing}</tbody>
                    </table>
                  </div>

                  <div class="actions">
                    <button class="push">Hinzufügen</button>
                    <button class="push">Bearbeiten</button>
                    <button class="push">Löschen</button>
                  </div>
                </div>
                <div class="sponsors">
                  <button class="push kaart">
                    <svg width="12" height="60" viewBox="0 0 12 60"><path d="M12 0Q-9 30 12 60Q-4 30 12 0z" fill="#000" stroke="#000"/></svg>
                    Kaart
                  </button>
                  <button class="push mapwith">${this.icon("globe", 96)}<span>mapwith.ai</span></button>
                </div>
              </div>
            </section>
          </main>

          <footer class="footer">
            <label class="expert"><input class="box" type="checkbox" checked />Expertenmodus</label>
            <div class="dialog-buttons">
              <button class="push"><svg width="48" height="48" viewBox="0 0 48 48">${okIcon}</svg>OK</button>
              <button class="push"><svg width="48" height="48" viewBox="0 0 48 48">${cancelIcon}</svg>Abbrechen</button>
              <button class="push"><svg width="48" height="48" viewBox="0 0 48 48">${helpIcon}</svg>Hilfe</button>
            </div>
          </footer>
          <div class="taskbar"></div>
        </div>
      </div>
    `;
  }
}
